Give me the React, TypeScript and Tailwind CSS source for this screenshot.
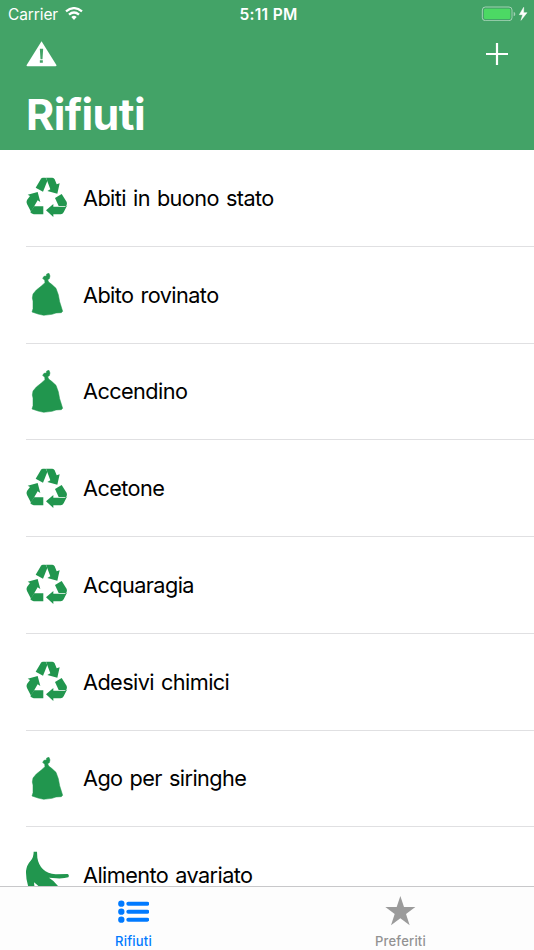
import type { ReactNode } from 'react';

type Category = 'recycle' | 'bag' | 'organic';

interface Waste {
  name: string;
  category: Category;
}

const WASTES: Waste[] = [
  { name: 'Abiti in buono stato', category: 'recycle' },
  { name: 'Abito rovinato', category: 'bag' },
  { name: 'Accendino', category: 'bag' },
  { name: 'Acetone', category: 'recycle' },
  { name: 'Acquaragia', category: 'recycle' },
  { name: 'Adesivi chimici', category: 'recycle' },
  { name: 'Ago per siringhe', category: 'bag' },
  { name: 'Alimento avariato', category: 'organic' },
];

const ICONS: Record<Category, ReactNode> = {
  recycle: (
    <svg viewBox="0 1 192 192" className="size-16 shrink-0" fill="#21964e">
      <path d="M75 39 Q77 36 81 36 L89 36 L94 46 L81 78 L59 66 Z" />
      <path d="M90 36 L109 36 Q114 37 116 41 L122 56 L131 53 L124 84 L94 76 L103 71 Z" />
      <path d="M117 97 L137 85 L152 109 Q155 116 150 121 L128 121 Z" />
      <path d="M154 118 L143 140 Q140 146 134 146 L112 146 L112 154 L90 134 L112 115 L112 123 L146 123 Q151 122 154 118 Z" />
      <path d="M35 87 L65 79 L73 109 L65 104 L45 138 L33 115 Q30 109 33 103 L42 91 Z" />
      <path d="M54 122 L82 122 L82 146 L53 146 Q47 145 43 140 Z" />
    </svg>
  ),
  bag: (
    <svg viewBox="0 3 192 192" className="size-16 shrink-0" fill="#21964e" stroke="#21964e" strokeWidth="1.5">
      <path d="M92 36 L99 34 L102 42 L100 50 L95 53 L98 60 L107 67 L120 79 L127 98 L131 119 L140 148 L136 152 L120 153 L108 157 L83 160 L66 156 L48 150 L51 140 L51 117 L49 108 L51 96 L61 84 L76 72 L87 62 L86 55 L80 49 L84 43 L91 42 Z" />
    </svg>
  ),
  organic: (
    <svg viewBox="0 11 192 192" className="size-16 shrink-0" fill="#21964e">
      <path d="M53 34 L63 34 L64 52 Q67 72 81 87 Q95 100 119 102 L155 101 Q161 104 157 111 Q145 115 121 114 L99 112 Q113 120 126 137 L129 155 L75 145 Q64 133 54 126 L57 155 L40 149 Q29 117 30 92 Q32 74 44 61 Q53 51 53 34 Z" />
    </svg>
  ),
};

function StatusBar() {
  return (
    <div className="flex h-7 items-center justify-between pl-2 pr-[6px] text-white">
      <div className="flex w-[200px] items-center gap-[7px]">
        <span className="w-[50px] pt-px text-[15.5px] tracking-[-0.1px]">Carrier</span>
        <svg viewBox="0 0 54 39" className="-mt-px h-[13px] w-[18px]" fill="none" stroke="white" strokeWidth="7">
          <path d="M3 13 Q27 -6 51 13" />
          <path d="M12 23 Q27 10 42 23" />
          <path d="M19 30 Q27 23 35 30 L27 39 Z" fill="white" stroke="none" />
        </svg>
      </div>
      <span className="pl-px pt-px text-[15.5px] font-semibold tracking-[0.3px]">5:11 PM</span>
      <div className="flex w-[200px] justify-end">
        <svg viewBox="0 0 141 45" className="-mt-px h-[15px] w-[47px]" fill="none">
          <rect x="4" y="3" width="89" height="41" rx="9" stroke="white" strokeOpacity=".5" strokeWidth="3" />
          <rect x="9" y="8" width="79" height="31" rx="4" fill="#4cd964" />
          <path d="M98 17 Q103 19 103 24 Q103 29 98 31 Z" fill="white" fillOpacity=".5" />
          <path d="M128 4 L115 26 L125 26 L120 43 L138 20 L128 20 Z" fill="white" stroke="white" strokeWidth="1.5" />
        </svg>
      </div>
    </div>
  );
}

function Header() {
  return (
    <header className="h-[150px] shrink-0 bg-[#43a367]">
      <StatusBar />
      <div className="flex h-[52px] items-center justify-between pl-[26px] pr-[25px]">
        <svg viewBox="0 0 92 78" className="h-[26px] w-[31px]">
          <path d="M46 1 L91 73 Q91 76 88 76 L4 76 Q1 76 1 73 Z" fill="white" />
          <path d="M41 23 H51 L49 55 H43 Z M41 58 H50 V65 H41 Z" fill="#43a367" />
        </svg>
        <svg viewBox="0 0 24 24" className="size-6" stroke="white" strokeWidth="2.2">
          <path d="M12 1 V23 M1 12 H23" />
        </svg>
      </div>
      <h1 className="pl-[26px] pt-1.5 text-[43px] leading-[56px] font-bold tracking-[-0.6px] text-white">Rifiuti</h1>
    </header>
  );
}

function WasteRow({ waste }: { waste: Waste }) {
  return (
    <li className="flex h-[96.75px] shrink-0 pl-4">
      <div className="flex items-center">{ICONS[waste.category]}</div>
      <div className="relative flex flex-1 items-center pb-px pl-[3px]">
        <span className="text-[21.7px] leading-6 tracking-[-0.58px] text-black [word-spacing:1.5px]">{waste.name}</span>
        <span className="absolute bottom-0 -left-[54px] right-0 h-px bg-[#e0e0e2]" />
      </div>
    </li>
  );
}

function TabBar() {
  return (
    <nav className="flex h-16 shrink-0 border-t border-[#c8c8ca] bg-[#fdfdfd]">
      <div className="flex flex-1 flex-col items-center pt-[12.5px] text-[#007aff]">
        <svg viewBox="0 0 94 70" className="h-[23.3px] w-[31.3px]" fill="currentColor">
          <circle cx="10" cy="11" r="9.5" />
          <circle cx="10" cy="35" r="9.5" />
          <circle cx="10" cy="59" r="9.5" />
          <rect x="25" y="5" width="69" height="12" rx="6" />
          <rect x="25" y="29" width="69" height="12" rx="6" />
          <rect x="25" y="53" width="69" height="12" rx="6" />
        </svg>
        <span className="mt-[9.2px] text-[13px] leading-[18px] font-medium tracking-[0.2px]">Rifiuti</span>
      </div>
      <div className="flex flex-1 flex-col items-center pt-[9px] text-[#929292]">
        <svg viewBox="0 0 92 90" className="h-[30px] w-[30.7px]" fill="#9b9b9b">
          <path d="M46 0 L57 33 L91 33 L63 54 L74 88 L46 67 L18 88 L29 54 L1 33 L35 33 Z" />
        </svg>
        <span className="mt-[6px] text-[13px] leading-[18px] font-medium tracking-[0.2px]">Preferiti</span>
      </div>
    </nav>
  );
}

export default function App() {
  return (
    <div className="flex h-[950px] w-[534px] flex-col overflow-hidden bg-white font-['Inter',sans-serif]">
      <Header />
      <ul className="flex min-h-0 flex-1 flex-col overflow-hidden">
        {WASTES.map((waste) => (
          <WasteRow key={waste.name} waste={waste} />
        ))}
      </ul>
      <TabBar />
    </div>
  );
}
